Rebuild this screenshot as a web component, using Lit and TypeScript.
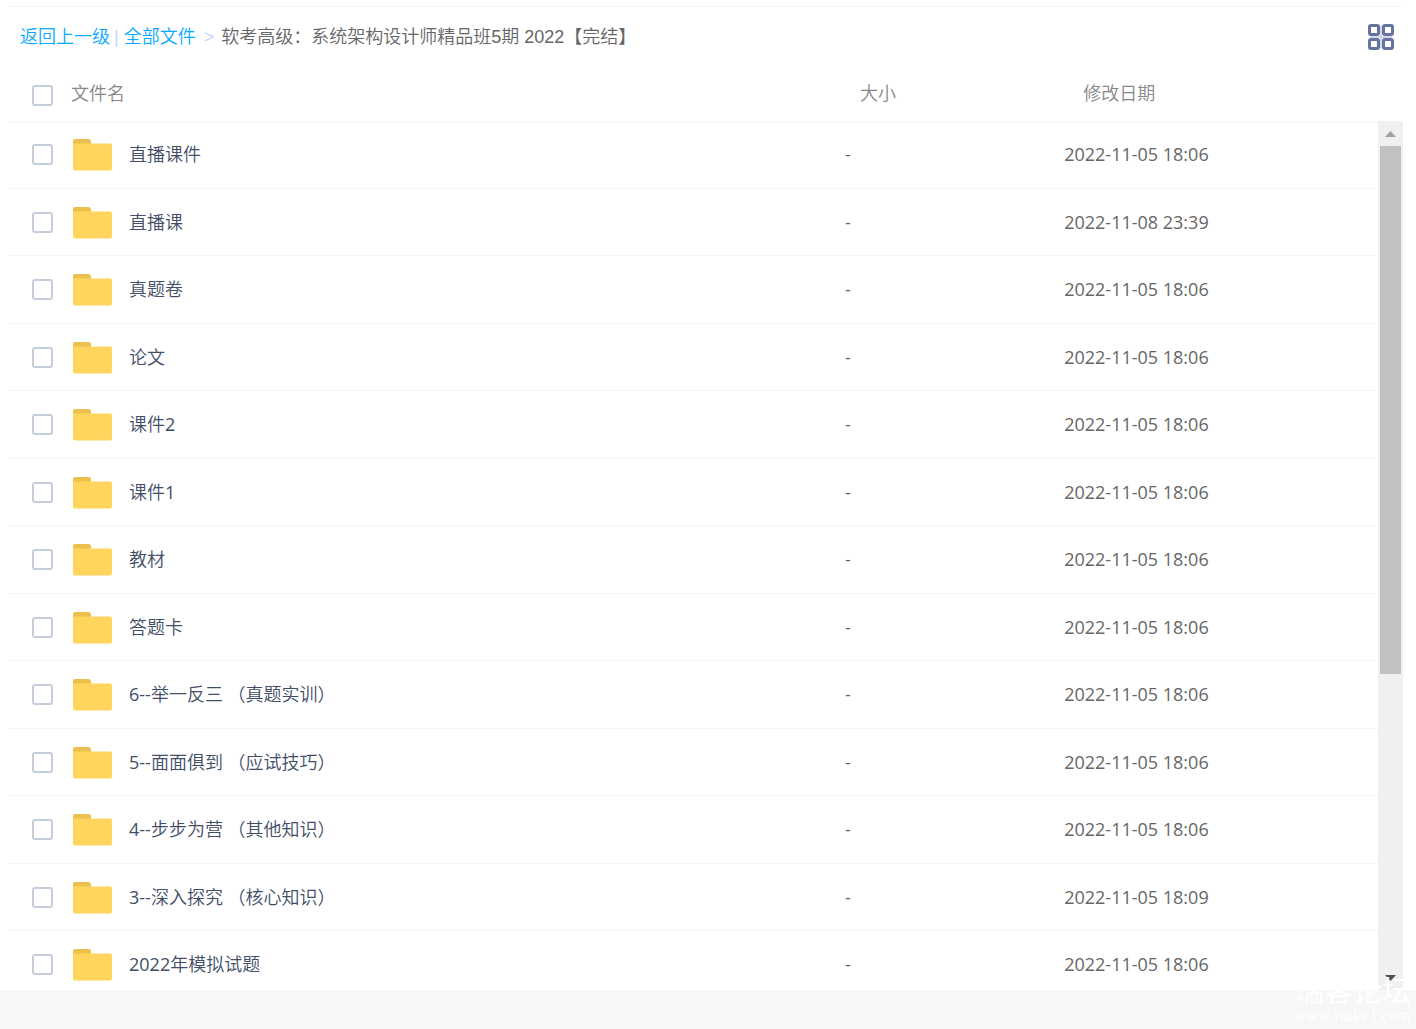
import { LitElement, html, css, svg } from "lit";
import { customElement, property } from "lit/decorators.js";

interface Entry {
  name: string;
  size: string;
  modified: string;
}

const folder = (name: string, modified = "2022-11-05 18:06"): Entry => ({ name, size: "-", modified });

const ENTRIES: Entry[] = [
  folder("直播课件"),
  folder("直播课", "2022-11-08 23:39"),
  folder("真题卷"),
  folder("论文"),
  folder("课件2"),
  folder("课件1"),
  folder("教材"),
  folder("答题卡"),
  folder("6--举一反三 （真题实训）"),
  folder("5--面面俱到 （应试技巧）"),
  folder("4--步步为营 （其他知识）"),
  folder("3--深入探究 （核心知识）", "2022-11-05 18:09"),
  folder("2022年模拟试题"),
];

@customElement("grid-icon")
export class GridIcon extends LitElement {
  static styles = css`
    :host { display: block; }
    .icon { display: block; width: 26px; height: 26px; }
  `;

  render() {
    return html`<svg class="icon" viewBox="0 0 26 26" fill="none" aria-hidden="true">
      <path stroke="#d3d9e8" stroke-width="2" d="M13 2V24M2 13H24" />
      ${[1.5, 15.5].map((y) => [1.5, 15.5].map((x) => svg`<rect x=${x} y=${y} width="9" height="9" rx="1.5" fill="#fff" stroke="#64739f" stroke-width="3" />`))}
    </svg>`;
  }
}

@customElement("folder-icon")
export class FolderIcon extends LitElement {
  static styles = css`
    :host { display: block; }
    .icon { display: block; width: 39px; height: 36px; }
  `;

  render() {
    return html`<svg class="icon" viewBox="0 -3 39 36" aria-hidden="true">
      <path fill="#ecc04d" d="M0 8V2Q0 0 2 0H15.500Q17.500 0 18 2V8Z" />
      <path fill="#ffd55d" d="M0 4.500H37Q39 4.500 39 6.500V29.500Q39 31.500 37 31.500H2Q0 31.500 0 29.500Z" />
    </svg>`;
  }
}

@customElement("scroll-rail")
export class ScrollRail extends LitElement {
  static styles = css`
    :host { display: flex; flex-direction: column; background: #f0f0f0; }
    .step {
      display: grid; place-items: center; width: 100%; height: 25px;
      padding: 0; border: 0; background: none; color: #505050;
    }
    .step.idle { color: #a0a0a0; }
    .arrow { display: block; width: 11px; height: 6px; fill: currentColor; }
    .track { flex: 1; padding: 0 2px; }
    .thumb { background: #c1c1c1; }
  `;

  @property({ type: Number }) visible = 64.5;

  render() {
    return html`
      <button class="step idle" aria-label="向上滚动"><svg class="arrow" viewBox="0 0 11 6"><path d="M0 6L5.500 0L11 6Z" /></svg></button>
      <div class="track"><div class="thumb" style="height:${this.visible}%"></div></div>
      <button class="step" aria-label="向下滚动"><svg class="arrow" viewBox="0 0 11 6"><path d="M0 0H11L5.500 6Z" /></svg></button>
    `;
  }
}

@customElement("app-root")
export class AppRoot extends LitElement {
  static styles = css`
    :host {
      display: flex; flex-direction: column; position: relative; box-sizing: border-box;
      height: 100vh; background: #fff; color: #666;
      font: 350 18px/24px "Liberation Sans", "Noto Sans CJK SC", sans-serif;
      text-spacing-trim: space-all;
    }
    .panel { flex: 1; min-height: 0; display: flex; flex-direction: column; margin: 6px 13px 0 8px; border-top: 1px solid #f3f5f8; }
    .toolbar { display: flex; align-items: center; justify-content: space-between; height: 60px; padding: 0 9px 0 12px; }
    .crumbs { display: flex; white-space: pre; }
    .link { color: #09aaff; text-decoration: none; }
    .divider { color: #c4d8f4; padding: 0 5px 0 4px; }
    .chevron { color: #c4d8f4; padding: 0 7px 0 8px; }
    .view { padding: 0; border: 0; background: none; }

    .list { flex: 1; min-height: 0; display: grid; grid-template-columns: minmax(0, 1fr) 25px; grid-template-rows: 54px minmax(0, 1fr); }
    .table { display: contents; }
    .head { display: block; grid-column: 1 / -1; color: #888; }
    .body { display: block; overflow-y: auto; scrollbar-width: none; }
    .row { display: grid; grid-template-columns: 60% 16% 24%; align-items: center; box-sizing: border-box; }
    .head .row { height: 54px; }
    .body .row { height: 67px; border-bottom: 1px solid #f2f6fd; }
    .body .row:nth-child(odd) { height: 68px; padding-bottom: 1px; }
    .body .row:first-child { height: 67px; margin-top: 1px; padding-bottom: 3px; border-top: 1px solid #f3f5f8; }
    .cell { padding: 0 15px; text-align: left; font-weight: 350; }
    .cell.name { display: flex; align-items: center; padding: 0 0 0 24px; }
    .body .cell { font-family: "Open Sans", "Noto Sans CJK SC DemiLight", "Noto Sans CJK SC", sans-serif; font-weight: 400; }
    .body .cell.name { color: #424e67; }
    .tick {
      appearance: none; flex: none; box-sizing: border-box; width: 21px; height: 21px; margin: 0;
      border: 2px solid #c3cddb; border-radius: 3px; background: #fff;
    }
    .head .tick { margin-top: 3px; }
    .title { padding-left: 18px; }
    .open { display: flex; align-items: center; gap: 17px; padding-left: 20px; color: inherit; text-decoration: none; }

    .footer { height: 39px; background: #f7f7f7; }
    .mark { position: absolute; right: 5px; bottom: 4px; color: #fff; text-align: right; white-space: nowrap; pointer-events: none; }
    .mark-name { display: block; font-size: 29px; line-height: 30px; font-weight: 400; }
    .mark-site { display: block; font: 17px/18px "Liberation Serif", serif; }
  `;

  render() {
    return html`
      <main class="panel" lang="zh-CN">
        <header class="toolbar">
          <nav class="crumbs"><a class="link" href="#up">返回上一级</a><span class="divider">|</span><a class="link" href="#all">全部文件</a><span class="chevron">&gt;</span><span>软考高级：系统架构设计师精品班5期 2022【完结】</span></nav>
          <button class="view" aria-label="切换视图"><grid-icon></grid-icon></button>
        </header>
        <div class="list">
          <table class="table">
            <thead class="head">
              <tr class="row">
                <th class="cell name"><input class="tick" id="all" type="checkbox" /><label class="title" for="all">文件名</label></th>
                <th class="cell">大小</th>
                <th class="cell">修改日期</th>
              </tr>
            </thead>
            <tbody class="body">
              ${ENTRIES.map((e) => html`
                <tr class="row">
                  <td class="cell name">
                    <input class="tick" type="checkbox" aria-label=${e.name} />
                    <a class="open" href="#folder"><folder-icon></folder-icon><span>${e.name}</span></a>
                  </td>
                  <td class="cell">${e.size}</td>
                  <td class="cell">${e.modified}</td>
                </tr>`)}
            </tbody>
          </table>
          <scroll-rail></scroll-rail>
        </div>
      </main>
      <footer class="footer"></footer>
      <div class="mark" lang="zh-CN"><span class="mark-name">瑞客论坛</span><span class="mark-site">www.ruike1.com</span></div>
    `;
  }
}
